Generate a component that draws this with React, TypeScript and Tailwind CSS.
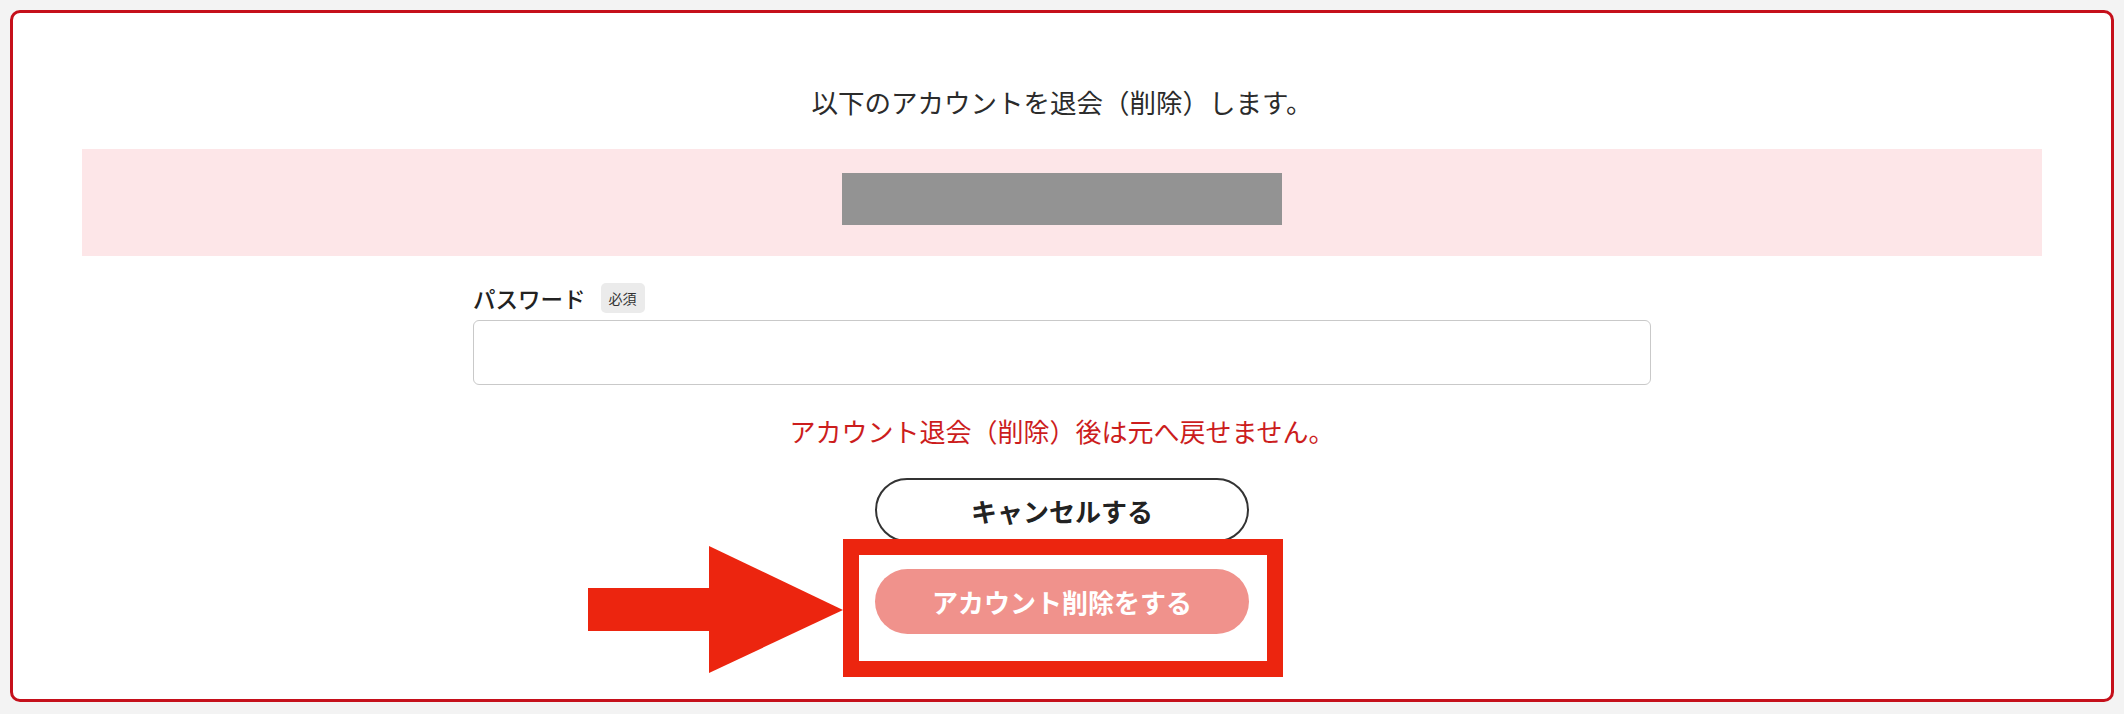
const font = {
  fontFamily: '"Noto Sans CJK JP", "Noto Sans", sans-serif',
};

const Arrow = () => (
  <svg
    width="255"
    height="127"
    viewBox="0 0 255 127"
    className="absolute left-[-287px] top-[-23px]"
  >
    <rect x="0" y="42" width="126" height="43" fill="#ec250f" />
    <polygon points="121,0 255,64 121,127" fill="#ec250f" />
  </svg>
);

const App = () => {
  return (
    <div className="min-h-[714px] w-full bg-[#f3f3f3] p-[10px]" style={font}>
      <div className="flex h-[692px] flex-col items-center rounded-[10px] border-[3px] border-[#c5101b] bg-white pt-[71px]">
        <p className="text-[26.5px] leading-[36px] text-[#2b2b2b]">
          以下のアカウントを退会（削除）します。
        </p>

        <div className="mt-[29px] flex h-[107px] w-[1960px] justify-center bg-[#fde6e8] pt-[24px]">
          <div className="h-[52px] w-[440px] bg-[#939393]" />
        </div>

        <form className="flex w-[1178px] flex-col">
          <div className="mt-[27px] flex h-[30px] items-center gap-[15px]">
            <label className="text-[22.5px] font-medium leading-[30px] text-[#222]">
              パスワード
            </label>
            <span className="flex h-[30px] items-center rounded-[5px] bg-[#ebebeb] px-[8px] text-[14px] text-[#333]">
              必須
            </span>
          </div>
          <input
            type="password"
            className="mt-[7px] h-[65px] w-full rounded-[6px] border border-[#c9c9c9] bg-white px-4 text-lg outline-none"
          />
        </form>

        <p className="mt-[28px] text-[26px] leading-[36px] text-[#cc1d1d]">
          アカウント退会（削除）後は元へ戻せません。
        </p>

        <button
          type="button"
          className="mt-[29px] flex h-[64px] w-[374px] items-center justify-center rounded-full border-[2.5px] border-[#333] bg-white text-[26px] font-bold text-[#222]"
        >
          キャンセルする
        </button>

        <div className="relative mt-[27px]">
          <button
            type="button"
            className="flex h-[65px] w-[374px] items-center justify-center rounded-full bg-[#f0928c] text-[26px] font-bold text-white"
          >
            アカウント削除をする
          </button>
          {/* annotation overlay */}
          <div className="pointer-events-none absolute left-[-32px] top-[-30px] h-[138px] w-[440px] border-[16px] border-[#ec250f]" />
          <Arrow />
        </div>
      </div>
    </div>
  );
};

export default App;
